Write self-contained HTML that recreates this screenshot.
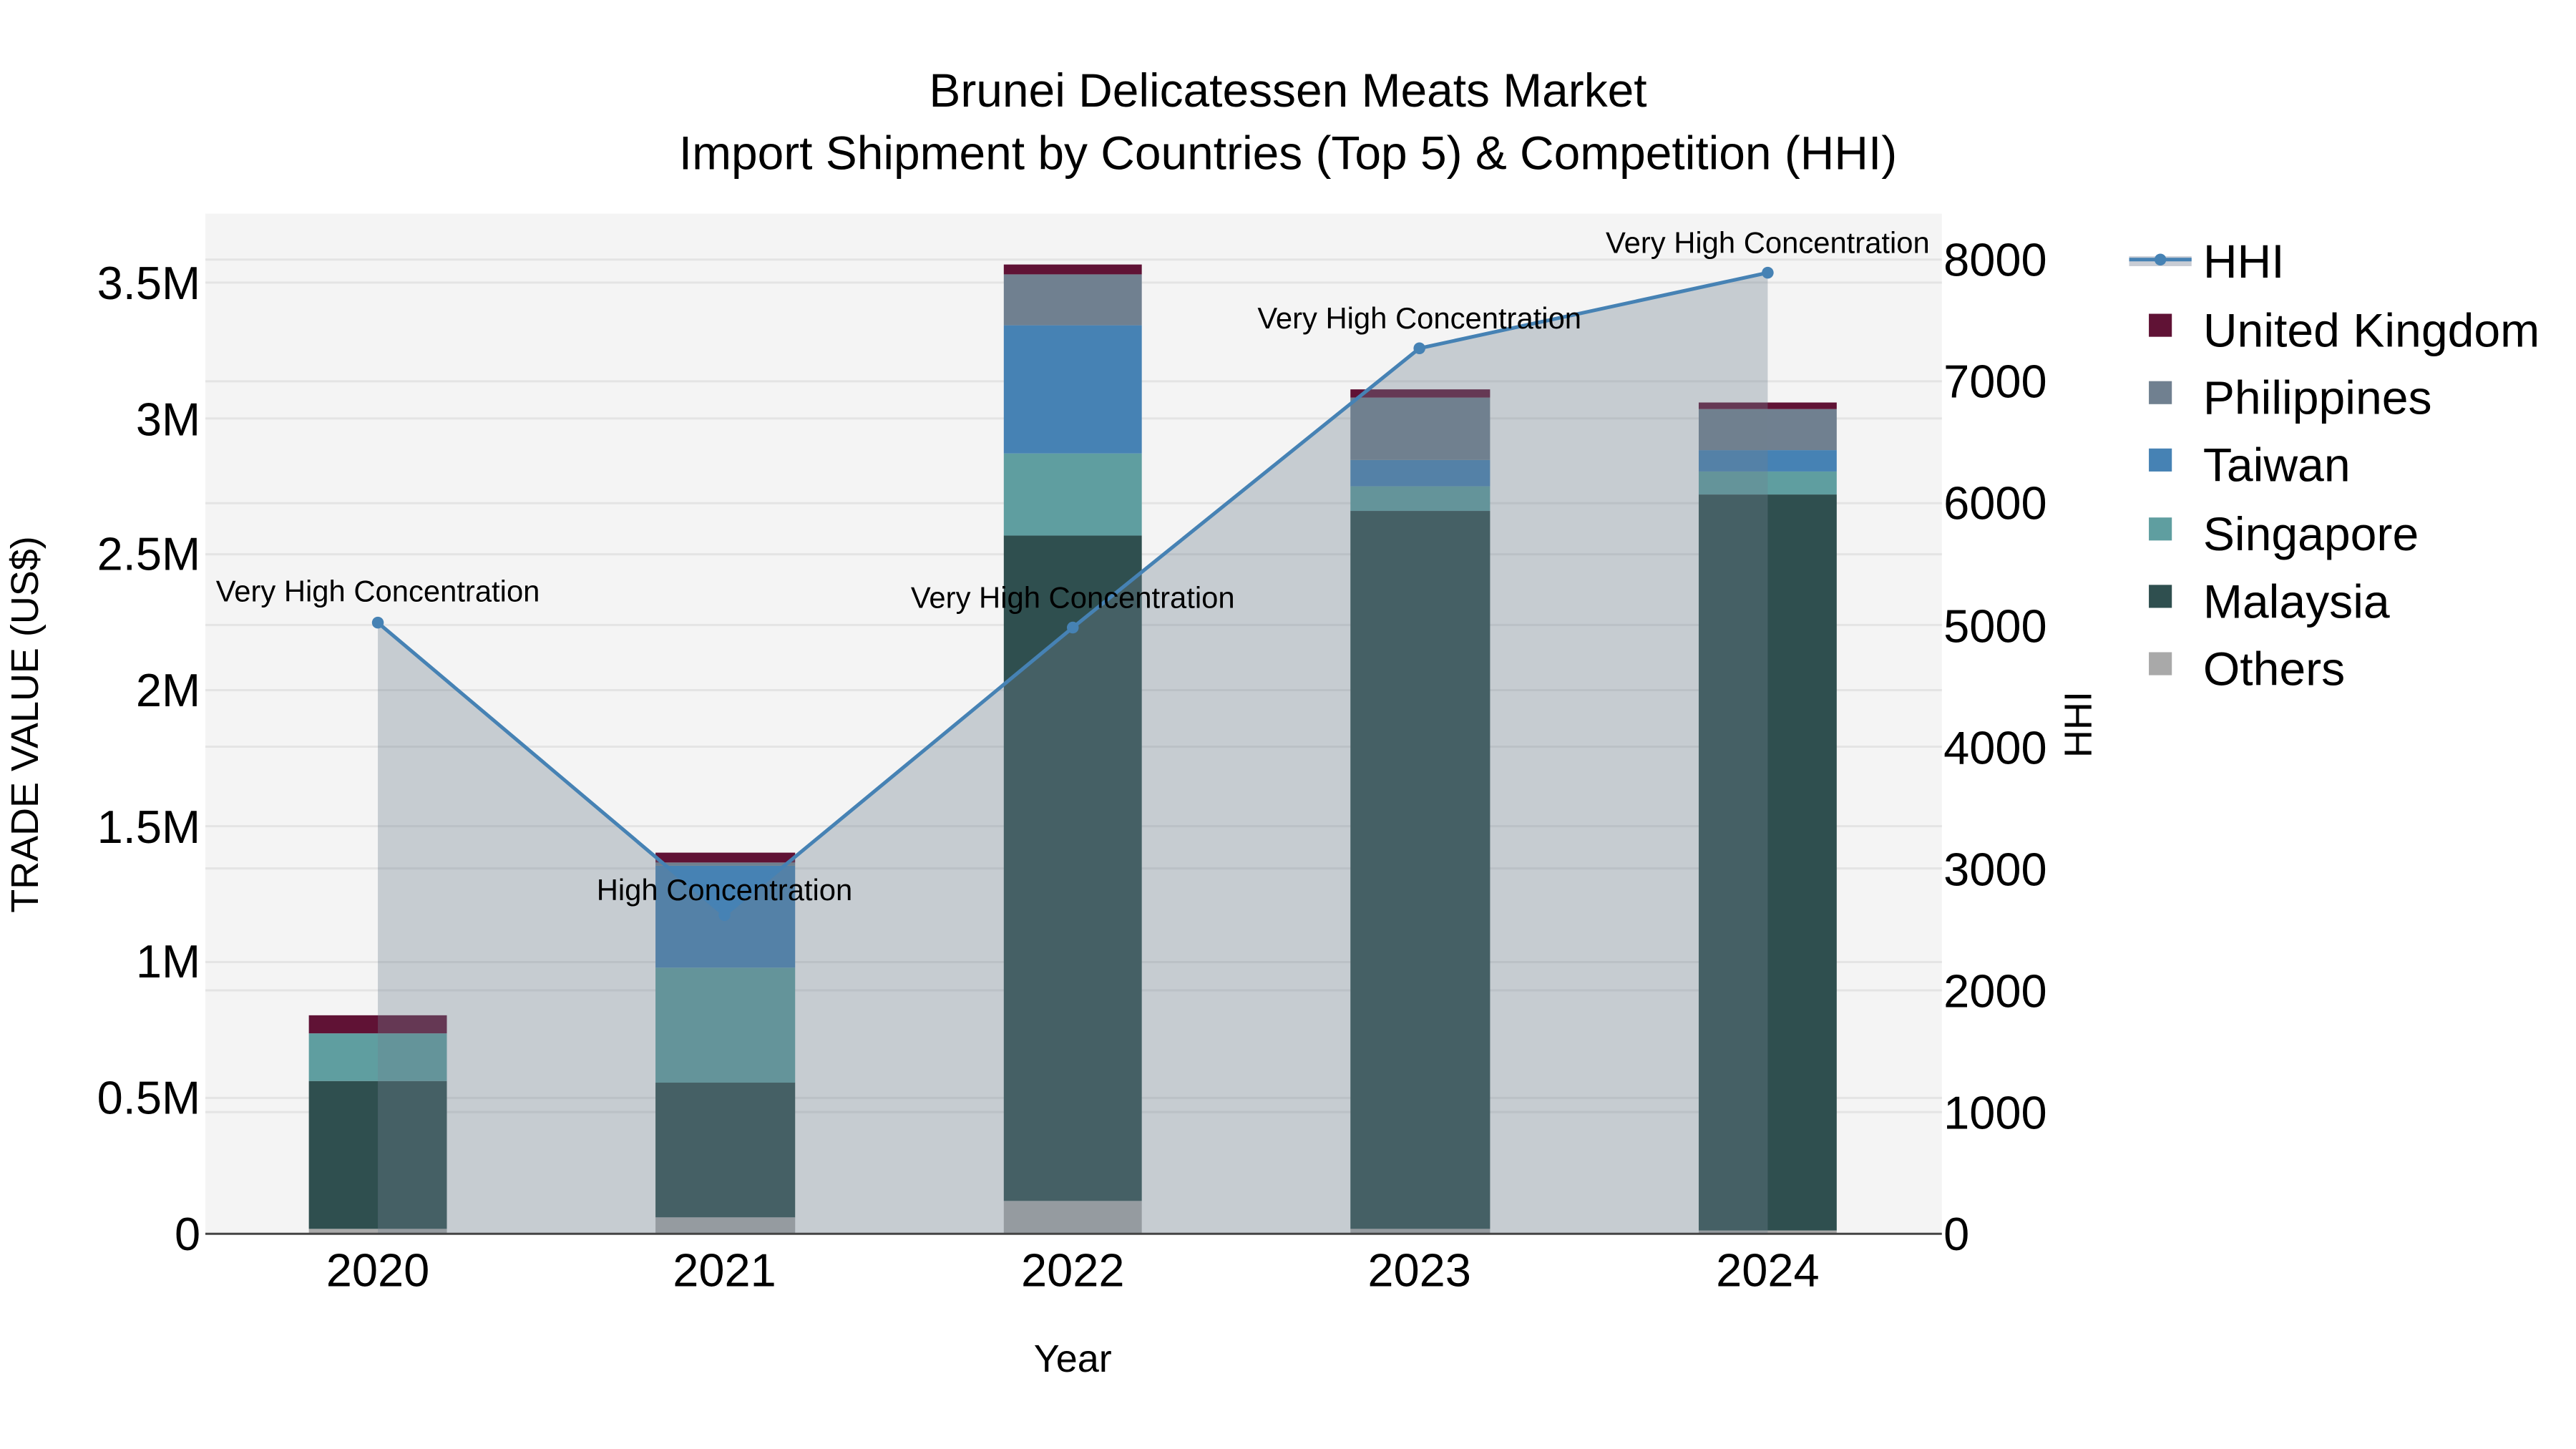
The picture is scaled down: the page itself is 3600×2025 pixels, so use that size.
<!DOCTYPE html>
<html><head><meta charset="utf-8"><style>
html,body{margin:0;padding:0;background:#fff;}
svg{display:block;font-family:"Liberation Sans",sans-serif;}
</style></head><body>
<svg width="3600" height="2025" viewBox="0 0 1568 882" xmlns="http://www.w3.org/2000/svg">
<rect x="0" y="0" width="1568" height="882" fill="#fff"/>
<rect x="125" y="130" width="1057" height="621" fill="#f4f4f4"/>
<g stroke="#e4e4e4" stroke-width="1.3">
<line x1="125" x2="1182" y1="668.3" y2="668.3"/>
<line x1="125" x2="1182" y1="585.6" y2="585.6"/>
<line x1="125" x2="1182" y1="502.9" y2="502.9"/>
<line x1="125" x2="1182" y1="420.1" y2="420.1"/>
<line x1="125" x2="1182" y1="337.4" y2="337.4"/>
<line x1="125" x2="1182" y1="254.7" y2="254.7"/>
<line x1="125" x2="1182" y1="172" y2="172"/>
<line x1="125" x2="1182" y1="676.9" y2="676.9"/>
<line x1="125" x2="1182" y1="602.8" y2="602.8"/>
<line x1="125" x2="1182" y1="528.6" y2="528.6"/>
<line x1="125" x2="1182" y1="454.5" y2="454.5"/>
<line x1="125" x2="1182" y1="380.4" y2="380.4"/>
<line x1="125" x2="1182" y1="306.3" y2="306.3"/>
<line x1="125" x2="1182" y1="232.1" y2="232.1"/>
<line x1="125" x2="1182" y1="158" y2="158"/>
</g>
<g>
<rect x="188" y="748" width="84" height="3" fill="#a9a9a9"/>
<rect x="188" y="658" width="84" height="90" fill="#2f4f4f"/>
<rect x="188" y="629" width="84" height="29" fill="#5f9ea0"/>
<rect x="188" y="618" width="84" height="11" fill="#601235"/>
<rect x="399" y="741" width="85" height="10" fill="#a9a9a9"/>
<rect x="399" y="659" width="85" height="82" fill="#2f4f4f"/>
<rect x="399" y="589" width="85" height="70" fill="#5f9ea0"/>
<rect x="399" y="527" width="85" height="62" fill="#4682b4"/>
<rect x="399" y="525" width="85" height="2" fill="#708090"/>
<rect x="399" y="519" width="85" height="6" fill="#601235"/>
<rect x="611" y="731" width="84" height="20" fill="#a9a9a9"/>
<rect x="611" y="326" width="84" height="405" fill="#2f4f4f"/>
<rect x="611" y="276" width="84" height="50" fill="#5f9ea0"/>
<rect x="611" y="198" width="84" height="78" fill="#4682b4"/>
<rect x="611" y="167" width="84" height="31" fill="#708090"/>
<rect x="611" y="161" width="84" height="6" fill="#601235"/>
<rect x="822" y="748" width="85" height="3" fill="#a9a9a9"/>
<rect x="822" y="311" width="85" height="437" fill="#2f4f4f"/>
<rect x="822" y="296" width="85" height="15" fill="#5f9ea0"/>
<rect x="822" y="280" width="85" height="16" fill="#4682b4"/>
<rect x="822" y="242" width="85" height="38" fill="#708090"/>
<rect x="822" y="237" width="85" height="5" fill="#601235"/>
<rect x="1034" y="749" width="84" height="2" fill="#a9a9a9"/>
<rect x="1034" y="301" width="84" height="448" fill="#2f4f4f"/>
<rect x="1034" y="287" width="84" height="14" fill="#5f9ea0"/>
<rect x="1034" y="274" width="84" height="13" fill="#4682b4"/>
<rect x="1034" y="249" width="84" height="25" fill="#708090"/>
<rect x="1034" y="245" width="84" height="4" fill="#601235"/>
</g>
<polygon points="230,751 230,379 441,557 653,382 864,212 1076,166 1076,751" fill="rgb(112,128,144)" fill-opacity="0.35"/>
<polyline points="230,379 441,557 653,382 864,212 1076,166" fill="none" stroke="#4682b4" stroke-width="2.2"/>
<g fill="#4682b4">
<circle cx="230" cy="379" r="3.6"/><circle cx="441" cy="557" r="3.6"/><circle cx="653" cy="382" r="3.6"/><circle cx="864" cy="212" r="3.6"/><circle cx="1076" cy="166" r="3.6"/>
</g>
<line x1="125" x2="1182" y1="751" y2="751" stroke="#444" stroke-width="1.3"/>
<g font-size="18.2" fill="#000" text-anchor="middle">
<text x="230" y="366">Very High Concentration</text>
<text x="441" y="548">High Concentration</text>
<text x="653" y="370">Very High Concentration</text>
<text x="864" y="200">Very High Concentration</text>
<text x="1076" y="154">Very High Concentration</text>
</g>
<g font-size="28.3" fill="#000" text-anchor="end">
<text x="122" y="761">0</text>
<text x="122" y="678">0.5M</text>
<text x="122" y="595">1M</text>
<text x="122" y="513">1.5M</text>
<text x="122" y="430">2M</text>
<text x="122" y="347">2.5M</text>
<text x="122" y="265">3M</text>
<text x="122" y="182">3.5M</text>
</g>
<g font-size="28.3" fill="#000" text-anchor="start">
<text x="1183" y="761">0</text>
<text x="1183" y="687">1000</text>
<text x="1183" y="613">2000</text>
<text x="1183" y="539">3000</text>
<text x="1183" y="465">4000</text>
<text x="1183" y="391">5000</text>
<text x="1183" y="316">6000</text>
<text x="1183" y="242">7000</text>
<text x="1183" y="168">8000</text>
</g>
<g font-size="28.3" fill="#000" text-anchor="middle">
<text x="230" y="783">2020</text>
<text x="441" y="783">2021</text>
<text x="653" y="783">2022</text>
<text x="864" y="783">2023</text>
<text x="1076" y="783">2024</text>
</g>
<text x="653" y="835" font-size="23.5" text-anchor="middle">Year</text>
<text transform="translate(23,441) rotate(-90)" font-size="23.5" text-anchor="middle">TRADE VALUE (US$)</text>
<text transform="translate(1273,441) rotate(-90)" font-size="23.5" text-anchor="middle">HHI</text>
<text x="784" y="65" font-size="28.7" text-anchor="middle">Brunei Delicatessen Meats Market</text>
<text x="784" y="103" font-size="28.7" text-anchor="middle">Import Shipment by Countries (Top 5) &amp; Competition (HHI)</text>
<g font-size="28.8" fill="#000">
<rect x="1296" y="156" width="38" height="6" fill="#c8ccd4"/>
<line x1="1296" x2="1334" y1="158" y2="158" stroke="#4682b4" stroke-width="2.2"/>
<circle cx="1315" cy="158" r="3.6" fill="#4682b4"/>
<text x="1341" y="169">HHI</text>
<rect x="1308" y="191" width="14" height="14" fill="#601235"/><text x="1341" y="211">United Kingdom</text>
<rect x="1308" y="232" width="14" height="14" fill="#708090"/><text x="1341" y="252">Philippines</text>
<rect x="1308" y="273" width="14" height="14" fill="#4682b4"/><text x="1341" y="293">Taiwan</text>
<rect x="1308" y="315" width="14" height="14" fill="#5f9ea0"/><text x="1341" y="335">Singapore</text>
<rect x="1308" y="356" width="14" height="14" fill="#2f4f4f"/><text x="1341" y="376">Malaysia</text>
<rect x="1308" y="397" width="14" height="14" fill="#a9a9a9"/><text x="1341" y="417">Others</text>
</g>
</svg>
</body></html>
